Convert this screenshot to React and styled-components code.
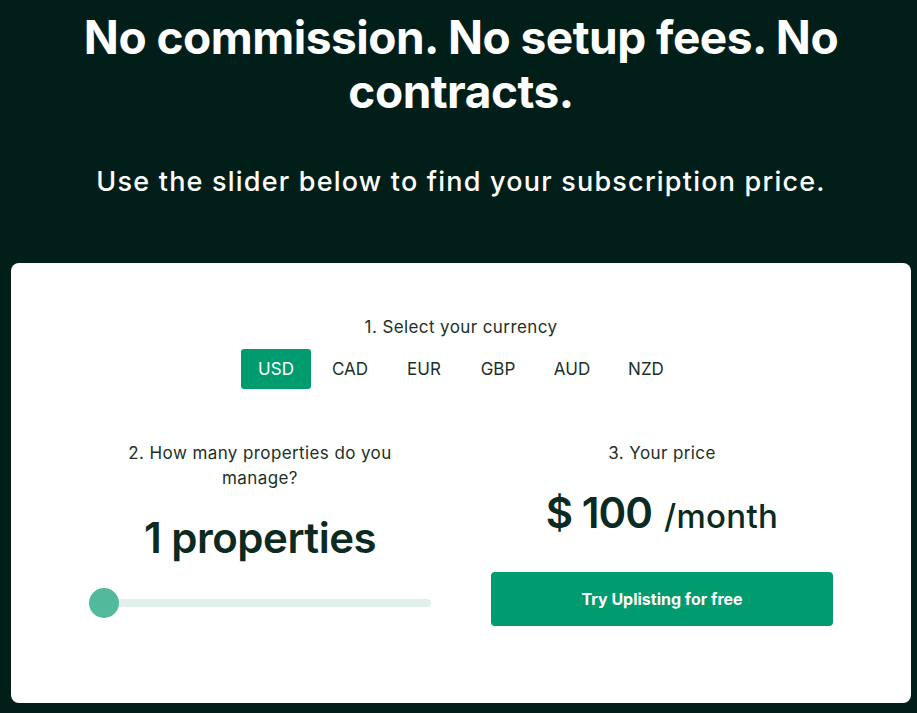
import React, { useState } from "react";
import styled, { createGlobalStyle } from "styled-components";

const GlobalStyle = createGlobalStyle`
    html, body {
        margin: 0;
        padding: 0;
        background-color: #011f18;
    }
    body {
        font-family: "Inter", "Noto Sans", sans-serif;
        -webkit-font-smoothing: antialiased;
    }
`;

const currencies = ["USD", "CAD", "EUR", "GBP", "AUD", "NZD"];

const App = () => {
    const [currency, setCurrency] = useState("USD");
    const [properties, setProperties] = useState(1);

    const percent = ((properties - 1) / 99) * 100;

    return (
        <Page>
            <GlobalStyle />
            <Hero>
                <Heading>No commission. No setup fees. No contracts.</Heading>
                <Subtitle>Use the slider below to find your subscription price.</Subtitle>
            </Hero>
            <Card>
                <StepLabel>1. Select your currency</StepLabel>
                <CurrencyRow>
                    {currencies.map((c) => (
                        <CurrencyButton
                            key={c}
                            $active={c === currency}
                            onClick={() => setCurrency(c)}
                        >
                            {c}
                        </CurrencyButton>
                    ))}
                </CurrencyRow>
                <Columns>
                    <Column>
                        <StepLabel $narrow>2. How many properties do you manage?</StepLabel>
                        <Count>{properties} properties</Count>
                        <SliderWrap>
                            <Track />
                            <Thumb style={{ left: `calc(${percent}% - ${percent * 0.3}px)` }} />
                            <RangeInput
                                type="range"
                                min="1"
                                max="100"
                                value={properties}
                                onChange={(e) => setProperties(Number(e.target.value))}
                            />
                        </SliderWrap>
                    </Column>
                    <Column>
                        <StepLabel>3. Your price</StepLabel>
                        <Price>
                            <Amount>$ {properties * 100}</Amount>
                            <Period>/month</Period>
                        </Price>
                        <CtaButton type="button">Try Uplisting for free</CtaButton>
                    </Column>
                </Columns>
            </Card>
        </Page>
    );
};

export default App;

const Page = styled.div`
    min-height: 713px;
    padding: 10px 0 10px 11px;
    box-sizing: border-box;
`;

const Hero = styled.div`
    width: 900px;
    text-align: center;
    color: #ffffff;
`;

const Heading = styled.h1`
    margin: 0 auto;
    max-width: 780px;
    font-size: 46px;
    line-height: 54px;
    font-weight: 700;
    letter-spacing: -0.5px;
`;

const Subtitle = styled.p`
    margin: 46px 0 0;
    font-size: 27px;
    line-height: 36px;
    font-weight: 500;
    letter-spacing: 1.2px;
`;

const Card = styled.div`
    margin-top: 63px;
    width: 900px;
    box-sizing: border-box;
    background-color: #ffffff;
    border-radius: 8px;
    padding: 52px 78px 77px;
    display: flex;
    flex-direction: column;
    align-items: center;
    color: #0b2a21;
`;

const StepLabel = styled.div`
    font-size: 17px;
    line-height: 25px;
    letter-spacing: 0.4px;
    text-align: center;
    color: #1c3028;
    max-width: ${(p) => (p.$narrow ? "290px" : "none")};
    margin: 0 auto;
`;

const CurrencyRow = styled.div`
    display: flex;
    gap: 4px;
    margin-top: 9px;
`;

const CurrencyButton = styled.button`
    width: 70px;
    height: 40px;
    padding: 0;
    border: none;
    border-radius: 3px;
    font-family: inherit;
    font-size: 17px;
    cursor: pointer;
    background-color: ${(p) => (p.$active ? "#009b6f" : "transparent")};
    color: ${(p) => (p.$active ? "#ffffff" : "#1c3028")};
`;

const Columns = styled.div`
    width: 100%;
    display: grid;
    grid-template-columns: 1fr 1fr;
    gap: 60px;
    margin-top: 52px;
`;

const Column = styled.div`
    display: flex;
    flex-direction: column;
    align-items: stretch;
`;

const Count = styled.div`
    margin-top: 22px;
    font-size: 42px;
    line-height: 50px;
    font-weight: 600;
    text-align: center;
    letter-spacing: -0.5px;
    color: #0b2a21;
`;

const SliderWrap = styled.div`
    position: relative;
    height: 30px;
    margin-top: 25px;
`;

const Track = styled.div`
    position: absolute;
    left: 0;
    right: 0;
    top: 11px;
    height: 8px;
    border-radius: 4px;
    background-color: #e1efea;
`;

const Thumb = styled.div`
    position: absolute;
    top: 0;
    width: 30px;
    height: 30px;
    border-radius: 50%;
    background-color: #52ba9a;
`;

const RangeInput = styled.input`
    position: absolute;
    inset: 0;
    width: 100%;
    margin: 0;
    opacity: 0;
    cursor: pointer;
`;

const Price = styled.div`
    margin-top: 22px;
    display: flex;
    justify-content: center;
    align-items: baseline;
    gap: 12px;
    color: #0b2a21;
`;

const Amount = styled.span`
    font-size: 42px;
    line-height: 50px;
    font-weight: 600;
    letter-spacing: -1px;
`;

const Period = styled.span`
    font-size: 33px;
    font-weight: 500;
    letter-spacing: 0.3px;
`;

const CtaButton = styled.button`
    margin-top: 34px;
    height: 54px;
    border: none;
    border-radius: 4px;
    background-color: #009b6f;
    color: #ffffff;
    font-family: inherit;
    font-size: 16px;
    font-weight: 700;
    cursor: pointer;

    &:hover {
        background-color: #008a63;
    }
`;
